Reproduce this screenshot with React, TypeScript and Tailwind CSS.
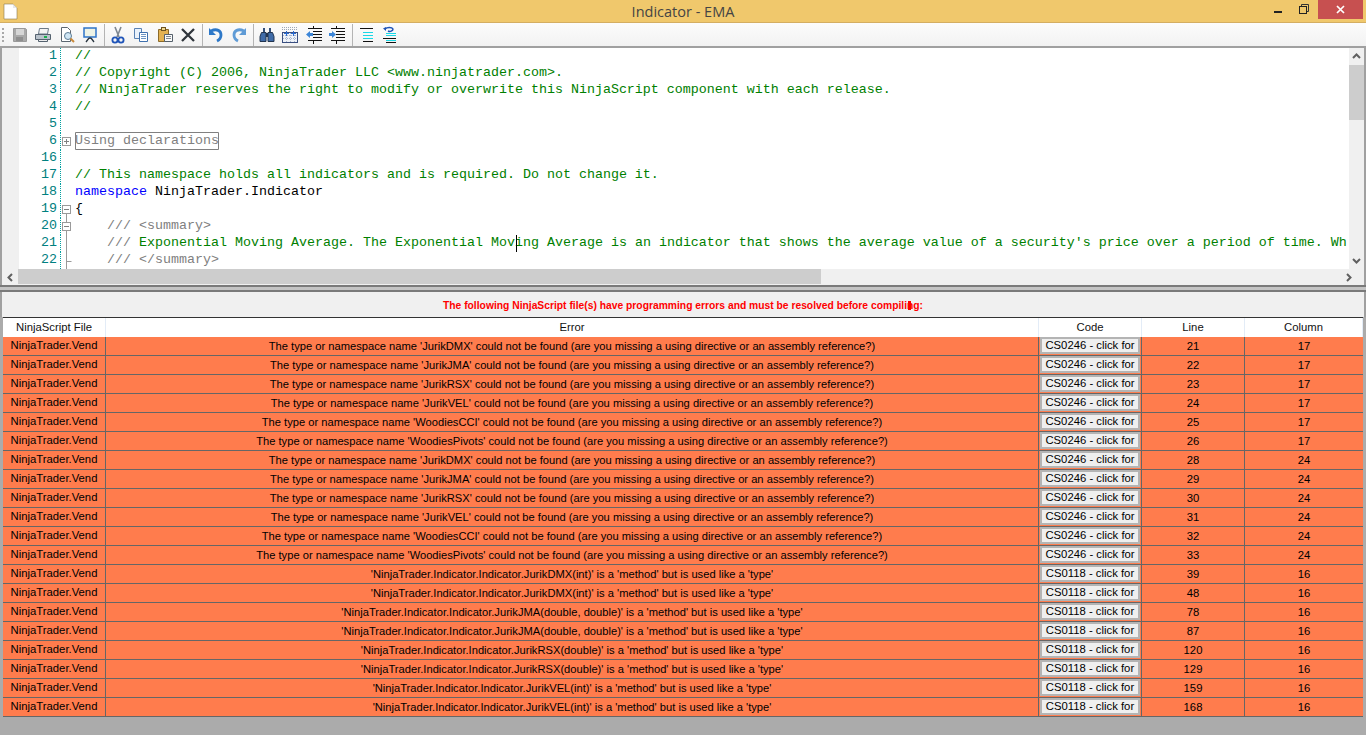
import React from 'react';

const sans = "font-['Liberation_Sans',Arial,sans-serif]";

const typeErr = (n: string) =>
  `The type or namespace name '${n}' could not be found (are you missing a using directive or an assembly reference?)`;
const methodErr = (n: string) =>
  `'NinjaTrader.Indicator.Indicator.${n}' is a 'method' but is used like a 'type'`;

const rows = [
  [typeErr('JurikDMX'), 'CS0246', '21', '17'],
  [typeErr('JurikJMA'), 'CS0246', '22', '17'],
  [typeErr('JurikRSX'), 'CS0246', '23', '17'],
  [typeErr('JurikVEL'), 'CS0246', '24', '17'],
  [typeErr('WoodiesCCI'), 'CS0246', '25', '17'],
  [typeErr('WoodiesPivots'), 'CS0246', '26', '17'],
  [typeErr('JurikDMX'), 'CS0246', '28', '24'],
  [typeErr('JurikJMA'), 'CS0246', '29', '24'],
  [typeErr('JurikRSX'), 'CS0246', '30', '24'],
  [typeErr('JurikVEL'), 'CS0246', '31', '24'],
  [typeErr('WoodiesCCI'), 'CS0246', '32', '24'],
  [typeErr('WoodiesPivots'), 'CS0246', '33', '24'],
  [methodErr('JurikDMX(int)'), 'CS0118', '39', '16'],
  [methodErr('JurikDMX(int)'), 'CS0118', '48', '16'],
  [methodErr('JurikJMA(double, double)'), 'CS0118', '78', '16'],
  [methodErr('JurikJMA(double, double)'), 'CS0118', '87', '16'],
  [methodErr('JurikRSX(double)'), 'CS0118', '120', '16'],
  [methodErr('JurikRSX(double)'), 'CS0118', '129', '16'],
  [methodErr('JurikVEL(int)'), 'CS0118', '159', '16'],
  [methodErr('JurikVEL(int)'), 'CS0118', '168', '16'],
];

const Icon = ({ children }: { children: React.ReactNode }) => (
  <div className="flex h-[22px] w-[23.5px] items-center justify-center">
    <svg width="18" height="18" viewBox="0 0 18 18">{children}</svg>
  </div>
);

const Sep = ({ w = 'w-[4px]' }: { w?: string }) => (
  <div className={`flex h-[22px] ${w} justify-center`}>
    <div className="h-full w-px bg-[#b4b4b4]" />
  </div>
);

const Toolbar = () => (
  <div className="box-content flex h-[23px] items-center border-b-2 border-[#a0a0a0] bg-gradient-to-b from-[#fcfcfc] to-[#f2f2f2] pl-[2px]">
    <div className="mr-[3px] flex h-[14px] w-[3px] flex-col justify-between">
      <div className="h-[2px] w-[2px] bg-[#a8a8a8]" />
      <div className="h-[2px] w-[2px] bg-[#a8a8a8]" />
      <div className="h-[2px] w-[2px] bg-[#a8a8a8]" />
      <div className="h-[2px] w-[2px] bg-[#a8a8a8]" />
    </div>
    {/* save */}
    <Icon>
      <path d="M2.500 2.500h12l1 1v12h-13z" fill="#a9a9a9" stroke="#9a9a9a" />
      <rect x="5" y="3" width="8" height="6" fill="#d6d6d6" />
      <rect x="5" y="11" width="7" height="4" fill="#8e8e8e" />
    </Icon>
    {/* print */}
    <Icon>
      <path d="M5.500 2.500h9l-1 5.500h-9z" fill="#f4f4f4" stroke="#6d7a88" />
      <path d="M1.500 8.500h15v5h-15z" fill="#b9c2cb" stroke="#55626f" />
      <path d="M4.500 13.500h9v2h-9z" fill="#eee" stroke="#55626f" />
      <rect x="10" y="10" width="3" height="2" fill="#19b04a" />
    </Icon>
    {/* preview */}
    <Icon>
      <path d="M3.500 1.500h6l3 3v11h-9z" fill="#fff" stroke="#5c6670" />
      <circle cx="10" cy="10" r="3.500" fill="#cfe6f5" stroke="#5d7d95" />
      <path d="M12.500 12.500l3.500 3.500" stroke="#c9893a" strokeWidth="2" />
    </Icon>
    {/* present */}
    <Icon>
      <rect x="3" y="2" width="12" height="9" fill="#eef3e6" stroke="#2e74c9" strokeWidth="1.500" />
      <path d="M9 11v2M8 12l-3 4M10 12l3 4" stroke="#29343f" strokeWidth="1.300" fill="none" />
    </Icon>
    <Sep />
    {/* cut */}
    <Icon>
      <path d="M6 1l4 10M12 1L8 11" stroke="#7e8791" strokeWidth="1.600" fill="none" />
      <circle cx="6" cy="14" r="2.600" fill="none" stroke="#1f54b8" strokeWidth="1.800" />
      <circle cx="12" cy="14" r="2.600" fill="none" stroke="#1f54b8" strokeWidth="1.800" />
    </Icon>
    {/* copy */}
    <Icon>
      <path d="M2.500 2.500h7v10h-7z" fill="#eaf2fb" stroke="#5a82b4" />
      <path d="M7.500 6.500h8v9h-8z" fill="#fff" stroke="#3f70ad" />
      <path d="M9 8.500h5M9 10.500h5M9 12.500h5" stroke="#6e95c4" />
    </Icon>
    {/* paste */}
    <Icon>
      <path d="M2.500 3.500h10v12h-10z" fill="#e3b252" stroke="#8c6a28" />
      <rect x="5.500" y="1.500" width="4" height="3" fill="#f2d88a" stroke="#6d5320" />
      <path d="M8.500 8.500h8v7h-8z" fill="#fafafa" stroke="#55606b" />
      <path d="M10 10.500h5M10 12.500h5" stroke="#7f8992" />
    </Icon>
    {/* delete */}
    <Icon>
      <path d="M3 3l12 12M15 3L3 15" stroke="#30363c" strokeWidth="2.300" />
    </Icon>
    <Sep />
    {/* undo */}
    <Icon>
      <path d="M4 5c6-3 10 0 10 4 0 3-2 5-4 6" fill="none" stroke="#2d78c8" strokeWidth="2.800" />
      <path d="M2 2v7h7z" fill="#2d78c8" />
    </Icon>
    {/* redo */}
    <Icon>
      <path d="M14 5C8 2 4 5 4 9c0 3 2 5 4 6" fill="none" stroke="#5f9bd6" strokeWidth="2.800" />
      <path d="M16 2v7H9z" fill="#5f9bd6" />
    </Icon>
    <Sep />
    {/* find */}
    <Icon>
      <path d="M5 2h2v4H5zM11 2h2v4h-2z" fill="#34507a" />
      <path d="M3.500 6.500h4.500v9H2v-5zM10 6.500h4.500l1.500 4v5h-6z" fill="#3f6ba8" stroke="#22344f" />
      <rect x="8" y="7" width="2" height="4" fill="#22344f" />
    </Icon>
    {/* bookmarks */}
    <Icon>
      <rect x="1.500" y="6.500" width="15" height="10" fill="#eef2f8" stroke="#3a4f80" />
      <path d="M1 1.500h16M1 3.500h16" stroke="#9ea8b5" strokeDasharray="1 1" />
      <path d="M2 9.500h14M2 12.500h14M5.500 7v9M9.500 7v9M13.500 7v9" stroke="#a9b6cf" strokeDasharray="1 1" />
      <path d="M5.500 5v5M3 7.500h5M12.500 5v5M10 7.500h5" stroke="#2a6ad0" />
    </Icon>
    {/* outdent */}
    <Icon>
      <path d="M3 2.500h14M8 5.500h9M8 8.500h9M8 11.500h9M3 14.500h14" stroke="#111" />
      <path d="M8.500 0v2M8.500 15v3" stroke="#111" />
      <path d="M1 8.500l4-3.500v2h3v3H5v2z" fill="#3c86d8" />
    </Icon>
    {/* indent */}
    <Icon>
      <path d="M3 2.500h14M8 5.500h9M8 8.500h9M8 11.500h9M3 14.500h14" stroke="#111" />
      <path d="M8.500 0v2M8.500 15v3" stroke="#111" />
      <path d="M8 8.500L4 5v2H1v3h3v2z" fill="#3c86d8" />
    </Icon>
    <Sep w="w-[6px]" />
    {/* lines */}
    <Icon>
      <path d="M2 2.500h13M5 15.500h10" stroke="#111" />
      <path d="M5 6.500h10M5 9.500h10M5 12.500h10" stroke="#19d8e6" />
    </Icon>
    <Icon>
      <path d="M2 12.500h13M5 16.500h10" stroke="#111" />
      <path d="M5 7.500h10M5 9.500h10M5 14.500h10" stroke="#19d8e6" />
      <path d="M4 3c2-2 7-2 8 0 0 2-3 3-5 2" fill="none" stroke="#1f54b8" strokeWidth="1.500" />
      <path d="M2 2.500l3-1.500v4z" fill="#1f54b8" />
    </Icon>
  </div>
);

type Part = [string, string];

const codeLines: { n: string; parts: Part[]; fold?: string }[] = [
  { n: '1', parts: [['//', 'text-[#008000]']] },
  { n: '2', parts: [['// Copyright (C) 2006, NinjaTrader LLC <www.ninjatrader.com>.', 'text-[#008000]']] },
  { n: '3', parts: [['// NinjaTrader reserves the right to modify or overwrite this NinjaScript component with each release.', 'text-[#008000]']] },
  { n: '4', parts: [['//', 'text-[#008000]']] },
  { n: '5', parts: [] },
  { n: '6', parts: [], fold: 'plus' },
  { n: '16', parts: [] },
  { n: '17', parts: [['// This namespace holds all indicators and is required. Do not change it.', 'text-[#008000]']] },
  { n: '18', parts: [['namespace', 'text-[#0000ff]'], [' NinjaTrader.Indicator', 'text-black']] },
  { n: '19', parts: [['{', 'text-black']], fold: 'minus' },
  { n: '20', parts: [['    /// <summary>', 'text-[#808080]']], fold: 'minusLine' },
  { n: '21', parts: [['    /// ', 'text-[#808080]'], ["Exponential Moving Average. The Exponential Moving Average is an indicator that shows the average value of a security's price over a period of time. Wh", 'text-[#008000]']], fold: 'line' },
  { n: '22', parts: [['    /// </summary>', 'text-[#808080]']], fold: 'end' },
];

const Fold = ({ kind }: { kind?: string }) => (
  <svg width="14" height="17" viewBox="0 0 14 17" className="shrink-0">
    {kind === 'plus' && (
      <>
        <rect x="1.500" y="4.500" width="8" height="8" fill="#fff" stroke="#9a9a9a" />
        <path d="M3 8.500h5M5.500 6v5" stroke="#808080" />
      </>
    )}
    {(kind === 'minus' || kind === 'minusLine') && (
      <>
        {kind === 'minusLine' && <path d="M5.500 0v4" stroke="#9a9a9a" />}
        <path d="M5.500 13v4" stroke="#9a9a9a" />
        <rect x="1.500" y="4.500" width="8" height="8" fill="#fff" stroke="#9a9a9a" />
        <path d="M3 8.500h5" stroke="#808080" />
      </>
    )}
    {kind === 'line' && <path d="M5.500 0v17" stroke="#9a9a9a" />}
    {kind === 'end' && <path d="M5.500 0v17M5.500 9.500h5" fill="none" stroke="#9a9a9a" />}
  </svg>
);

const Chevron = ({ d }: { d: string }) => (
  <svg width="9" height="9" viewBox="0 0 9 9">
    <path d={d} fill="none" stroke="#606060" strokeWidth="2" />
  </svg>
);

const Editor = () => (
  <div className="flex flex-col">
    <div className="flex h-[221px]">
      <div className="w-[19px] shrink-0 border-l-2 border-[#a0a0a0] bg-[#f0f0f0]" />
      <div className="min-w-0 flex-1 overflow-hidden bg-white font-['Liberation_Mono','Courier_New',monospace] text-[13.33px] leading-[15px] whitespace-pre">
        {codeLines.map((l) => (
          <div key={l.n} className="relative flex h-[17px]">
            <div className="w-[38px] shrink-0 text-right text-[#008080]">{l.n}</div>
            <div className="ml-[3px] w-px shrink-0 border-l border-dotted border-[#00a0a0]" />
            <Fold kind={l.fold} />
            {l.fold === 'plus' ? (
              <span className="-mt-[1px] h-[18px] w-[144px] rounded-[1px] text-[#808080] shadow-[inset_0_0_0_1px_#808080] leading-[17px]">
                Using declarations
              </span>
            ) : (
              <span>
                {l.parts.map((p, i) => (
                  <span key={i} className={p[1]}>
                    {p[0]}
                  </span>
                ))}
              </span>
            )}
            {l.n === '21' && <div className="absolute left-[497px] top-0 h-[17px] w-px bg-black" />}
          </div>
        ))}
      </div>
      <div className="flex w-[15px] shrink-0 flex-col items-center bg-[#f0f0f0]">
        <div className="flex h-[17px] w-full items-center justify-center">
          <Chevron d="M1 6l3.500-3.500L8 6" />
        </div>
        <div className="h-[55px] w-full bg-[#cdcdcd]" />
        <div className="flex-1" />
        <div className="flex h-[17px] w-full items-center justify-center">
          <Chevron d="M1 3l3.500 3.500L8 3" />
        </div>
      </div>
      <div className="w-[2px] shrink-0 bg-[#a0a0a0]" />
    </div>
    <div className="flex h-[16px] border-x-2 border-[#a0a0a0] bg-[#f0f0f0]">
      <div className="flex w-[16px] items-center justify-center">
        <Chevron d="M6 1L2.500 4.500 6 8" />
      </div>
      <div className="mb-px w-[803px] bg-[#cdcdcd]" />
      <div className="flex-1" />
      <div className="flex w-[22px] items-center justify-start pl-[2px]">
        <Chevron d="M3 1l3.500 3.500L3 8" />
      </div>
    </div>
  </div>
);

const cols = 'grid grid-cols-[103px_933px_103px_103px_118px]';

const Grid = () => (
  <div className={`ml-[3px] w-[1360px] ${sans} text-[11.3px] text-black`}>
    <div className={`${cols} h-[20px] border-t border-[#333] bg-white text-center leading-[19px] text-[#111]`}>
      {['NinjaScript File', 'Error', 'Code', 'Line', 'Column'].map((h) => (
        <div key={h} className="border-r border-[#e3ecf7]">
          {h}
        </div>
      ))}
    </div>
    {rows.map((r, i) => (
      <div key={i} className={`${cols} h-[19px] border-b border-[#666] bg-[#ff7c4d] text-center leading-[17px]`}>
        <div className="overflow-hidden border-r border-[#666] whitespace-nowrap">NinjaTrader.Vend</div>
        <div className="overflow-hidden border-r border-[#666] pt-px text-[11.17px] whitespace-nowrap">{r[0]}</div>
        <div className="border-r border-[#666] px-px">
          <div className="flex h-[17px] items-center justify-center overflow-hidden border-2 border-[#b4b4b4] bg-[#efefef] pb-px leading-[13px] whitespace-nowrap">
            {r[1]} - click for
          </div>
        </div>
        <div className="border-r border-[#666] pt-px">{r[2]}</div>
        <div className="pt-px">{r[3]}</div>
      </div>
    ))}
  </div>
);

export default function App() {
  return (
    <div className="flex h-[735px] w-[1366px] flex-col overflow-hidden bg-[#ababab]">
      {/* title bar */}
      <div className="relative flex h-[23px] shrink-0 items-start justify-center border-b border-[#d4ae62] bg-[#f0c86c]">
        <svg width="16" height="17" viewBox="0 0 16 17" className="absolute left-[2px] top-[3px]">
          <path d="M2 1h9l4 4v11H2z" fill="#fff" stroke="#8a7a50" strokeWidth="0.600" />
          <path d="M11 1v4h4z" fill="#e8e8e8" />
        </svg>
        <span className="font-['Open_Sans',sans-serif] text-[14.5px] leading-[23px] text-[#444]">Indicator - EMA</span>
        <div className="absolute left-[1274px] top-[11px] h-[2px] w-[8px] bg-[#222]" />
        <svg width="10" height="10" viewBox="0 0 10 10" className="absolute left-[1299px] top-[4px]">
          <path d="M2.500 2.500V.500h7v7H7.500" fill="none" stroke="#333" />
          <rect x="0.500" y="2.500" width="7" height="7" fill="none" stroke="#222" />
        </svg>
        <div className="absolute left-[1318px] top-0 flex h-[19px] w-[45px] items-center justify-center bg-[#c75050]">
          <svg width="9" height="9" viewBox="0 0 9 9">
            <path d="M1 1l7 7M8 1L1 8" stroke="#fff" strokeWidth="1.700" />
          </svg>
        </div>
      </div>
      <Toolbar />
      <Editor />
      {/* splitter */}
      <div className="h-[7px] shrink-0 border-y-2 border-[#7a7a7a] bg-[#c4c4c4]" />
      {/* errors panel */}
      <div className="relative flex h-[25px] shrink-0 items-center justify-center border-x-2 border-[#a0a0a0] bg-[#f0f0f0] pt-[2px]">
        <span className={`${sans} text-[10.3px] font-bold text-[#ff0000]`}>
          The following NinjaScript file(s) have programming errors and must be resolved before compiling:
        </span>
        <div className="absolute left-[906px] top-[9px] h-[9px] w-[3px] bg-[#ff0000]" />
      </div>
      <Grid />
    </div>
  );
}
